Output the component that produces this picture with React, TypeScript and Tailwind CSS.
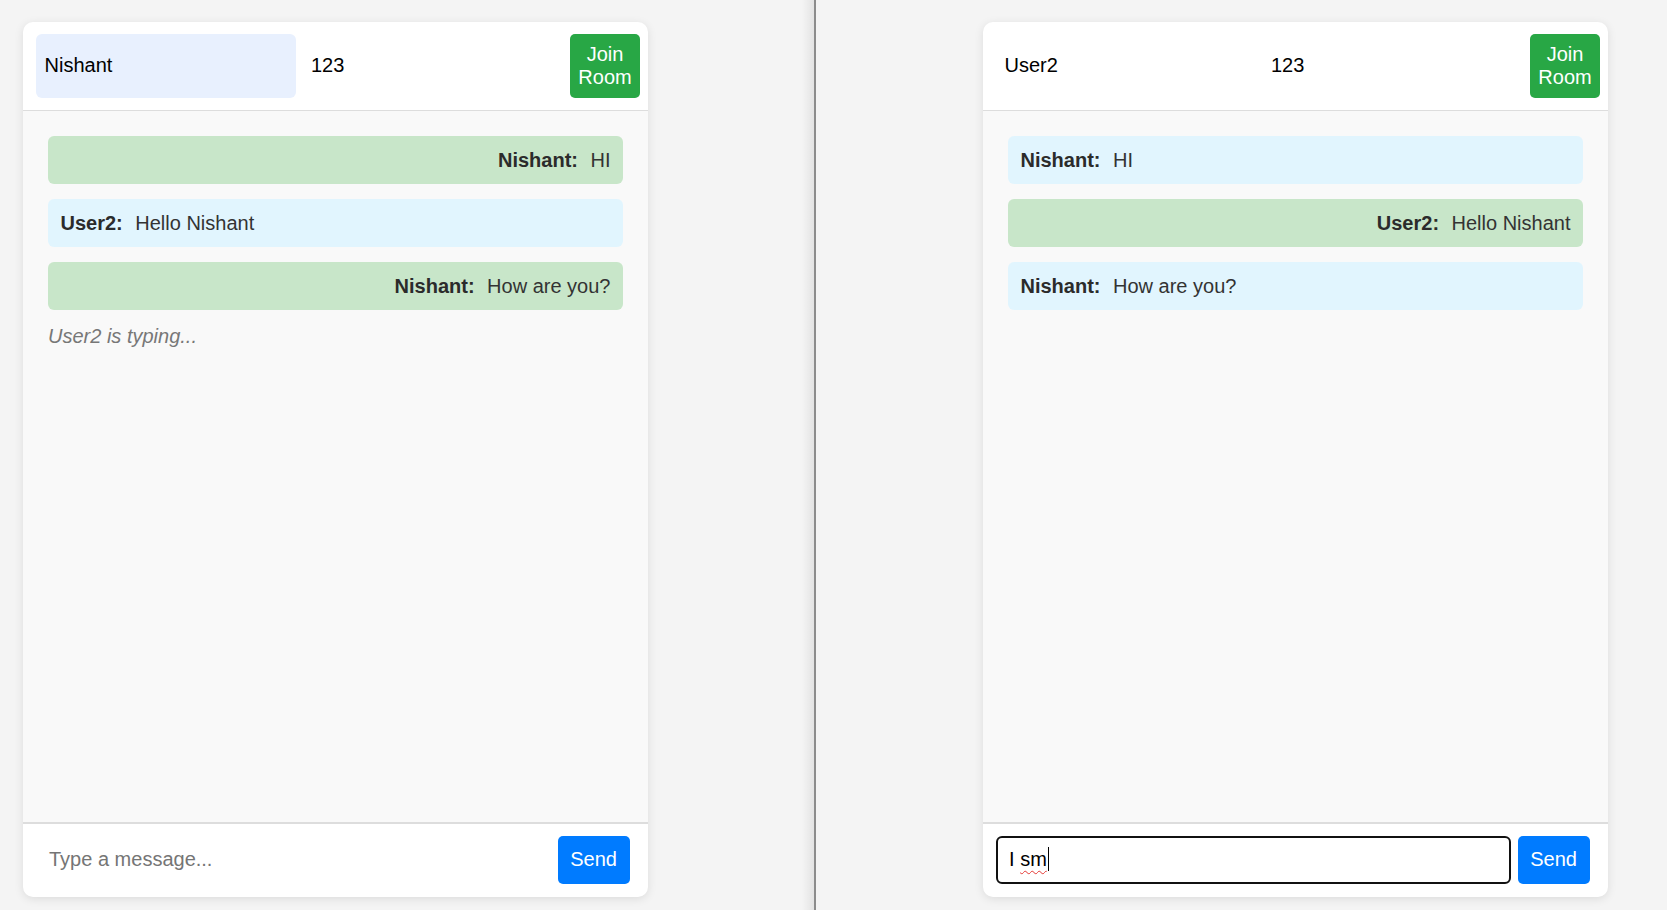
type Message = { user: string; text: string }

const messages: Message[] = [
  { user: 'Nishant', text: 'HI' },
  { user: 'User2', text: 'Hello Nishant' },
  { user: 'Nishant', text: 'How are you?' },
]

function Bubble({ message, mine }: { message: Message; mine: boolean }) {
  return (
    <div
      className={
        mine
          ? 'rounded-[6px] bg-[#c8e6c9] px-[12.5px] py-[12.5px] text-right text-[20px] leading-[23px] text-[#333]'
          : 'rounded-[6px] bg-[#e1f5fe] px-[12.5px] py-[12.5px] text-left text-[20px] leading-[23px] text-[#333]'
      }
    >
      <strong className="mr-[12.5px] font-bold text-[#2b2b2b]">{message.user}:</strong>
      {message.text}
    </div>
  )
}

function ChatCard({
  username,
  autofilled,
  typing,
  draft,
}: {
  username: string
  autofilled?: boolean
  typing?: string
  draft?: string
}) {
  return (
    <section className="flex h-[875px] w-[625px] flex-col overflow-hidden rounded-[10px] bg-white shadow-[0_2px_10px_rgba(0,0,0,0.1)]">
      <header className="flex h-[89px] items-stretch gap-[6.5px] border-b border-[#dddddd] py-[12px] pl-[13px] pr-[8px]">
        <div
          className={
            autofilled
              ? 'flex w-[260px] items-center rounded-[6px] bg-[#e8f0fe] px-[8.5px] pb-[3px] text-[20px] text-black'
              : 'flex w-[260px] items-center rounded-[6px] bg-white px-[8.5px] pb-[3px] text-[20px] text-black'
          }
        >
          {username}
        </div>
        <div className="flex w-[260px] items-center rounded-[6px] bg-white px-[8.5px] pb-[3px] text-[20px] text-black">123</div>
        <button className="ml-auto w-[70px] rounded-[5px] bg-[#28a745] px-[8px] pb-[1px] text-center text-[20px] leading-[23px] text-white">
          Join Room
        </button>
      </header>

      <div className="flex flex-1 flex-col gap-[15px] bg-[#f9f9f9] px-[25px] pt-[25px]">
        {messages.map((message, index) => (
          <Bubble key={index} message={message} mine={message.user === username} />
        ))}
        {typing && <p className="text-[20px] italic leading-[23px] text-[#777]">{typing}</p>}
      </div>

      <footer className="flex h-[75px] items-center gap-[7px] border-t-2 border-[#dddddd] pb-[1.5px] pl-[12.5px] pr-[18.5px]">
        {draft != null ? (
          <div className="flex h-[48px] flex-1 items-center rounded-[6px] border-2 border-[#111] px-[11.5px] pb-[2px] text-[20px] text-black">
            <span>I&nbsp;</span>
            <span className="underline decoration-[#e53935] decoration-wavy decoration-1 underline-offset-[4px]">{draft}</span>
            <span className="ml-[1px] h-[24px] w-[1px] bg-black" />
          </div>
        ) : (
          <div className="flex h-[48px] flex-1 items-center rounded-[6px] border-2 border-transparent px-[11.5px] pb-[2px] text-[20px] text-[#757575]">
            Type a message...
          </div>
        )}
        <button className="h-[48px] rounded-[5px] bg-[#007bff] px-[12.5px] pb-[2px] text-[20px] text-white">Send</button>
      </footer>
    </section>
  )
}

export default function App() {
  return (
    <div className="flex h-[910px] w-full overflow-hidden bg-[#f4f4f4] font-['Liberation_Sans',Arial,sans-serif]">
      <div className="w-[802px] shrink-0 pl-[23px] pt-[22px]">
        <ChatCard username="Nishant" autofilled typing="User2 is typing..." />
      </div>
      <div className="w-[12px] shrink-0 bg-gradient-to-r from-transparent to-[rgba(0,0,0,0.07)]" />
      <div className="w-[2px] shrink-0 bg-[#8c8c8c]" />
      <div className="flex-1 pl-[167px] pt-[22px]">
        <ChatCard username="User2" draft="sm" />
      </div>
    </div>
  )
}
